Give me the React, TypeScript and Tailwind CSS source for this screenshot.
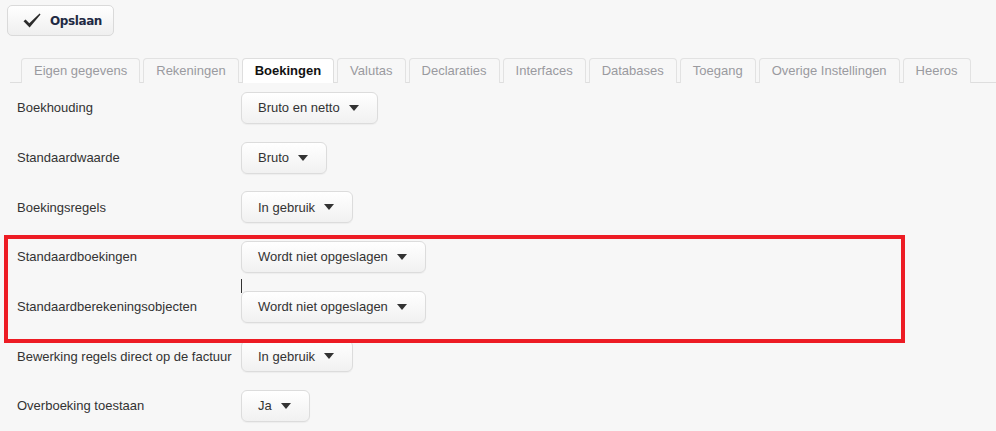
import React from 'react';

const tabs = [
  'Eigen gegevens',
  'Rekeningen',
  'Boekingen',
  'Valutas',
  'Declaraties',
  'Interfaces',
  'Databases',
  'Toegang',
  'Overige Instellingen',
  'Heeros',
];

const rows = [
  { label: 'Boekhouding', value: 'Bruto en netto' },
  { label: 'Standaardwaarde', value: 'Bruto' },
  { label: 'Boekingsregels', value: 'In gebruik' },
  { label: 'Standaardboekingen', value: 'Wordt niet opgeslagen' },
  { label: 'Standaardberekeningsobjecten', value: 'Wordt niet opgeslagen' },
  { label: 'Bewerking regels direct op de factuur', value: 'In gebruik' },
  { label: 'Overboeking toestaan', value: 'Ja' },
];

const Caret = () => (
  <svg width="10" height="6" viewBox="0 0 10 6" className="shrink-0">
    <path d="M0 0 L10 0 L5 6 Z" fill="#333" />
  </svg>
);

const Select = ({ value }: { value: string }) => (
  <button className="flex h-8 items-center gap-[9px] rounded-md border border-[#dcdcdc] bg-gradient-to-b from-white to-[#f1f1f1] pl-4 pr-[18px] text-[13px] text-[#333] shadow-[0_1px_1px_rgba(0,0,0,0.04)]">
    <span>{value}</span>
    <Caret />
  </button>
);

export default function App() {
  return (
    <div className="relative h-[431px] w-[996px] overflow-hidden bg-[#f7f7f7] font-['Liberation_Sans',Arial,sans-serif]">
      {/* toolbar */}
      <div className="pl-[7px] pt-[5px]">
        <button className="flex h-[31px] w-[107px] items-center gap-[9px] rounded-[5px] border border-[#dadada] bg-gradient-to-b from-white to-[#efefef] pl-[15px] text-[12px] font-bold text-[#1f2a44] font-['DejaVu_Sans',Tahoma,sans-serif]">
          <svg width="18" height="15" viewBox="0 0 18 15">
            <path d="M0.5 8.2 L2.6 6.6 L6.3 10.2 L16.6 0.6 L17.5 1.6 L6.6 14.4 Z" fill="#2b2b2b" />
          </svg>
          <span className="tracking-[-0.4px]">Opslaan</span>
        </button>
      </div>

      {/* tabs */}
      <div className="ml-[10px] mt-[22px] flex gap-[3px] border-b border-[#dedede] pl-[11px]">
        {tabs.map((t) => {
          const active = t === 'Boekingen';
          return (
            <div
              key={t}
              className={`-mb-px flex h-[25px] items-center rounded-t-[4px] border border-b-0 px-[12px] text-[13px] ${
                active
                  ? 'border-[#dedede] bg-white font-bold text-[#111]'
                  : 'border-[#e2e2e2] bg-[#f7f7f7] text-[#9a9a9f]'
              }`}
            >
              {t}
            </div>
          );
        })}
      </div>

      {/* form rows */}
      <div className="mt-[9px] flex flex-col gap-[17.67px] pl-[17px]">
        {rows.map((r) => (
          <div key={r.label} className="flex items-center">
            <div className="w-[224px] text-[13px] text-[#333]">{r.label}</div>
            <Select value={r.value} />
          </div>
        ))}
      </div>

      {/* text cursor */}
      <div className="absolute left-[241px] top-[279px] h-[14px] w-px bg-[#333]" />

      {/* highlight annotation */}
      <div className="absolute left-[4px] top-[235px] h-[108px] w-[901px] border-4 border-[#ed1c24]" />
    </div>
  );
}
